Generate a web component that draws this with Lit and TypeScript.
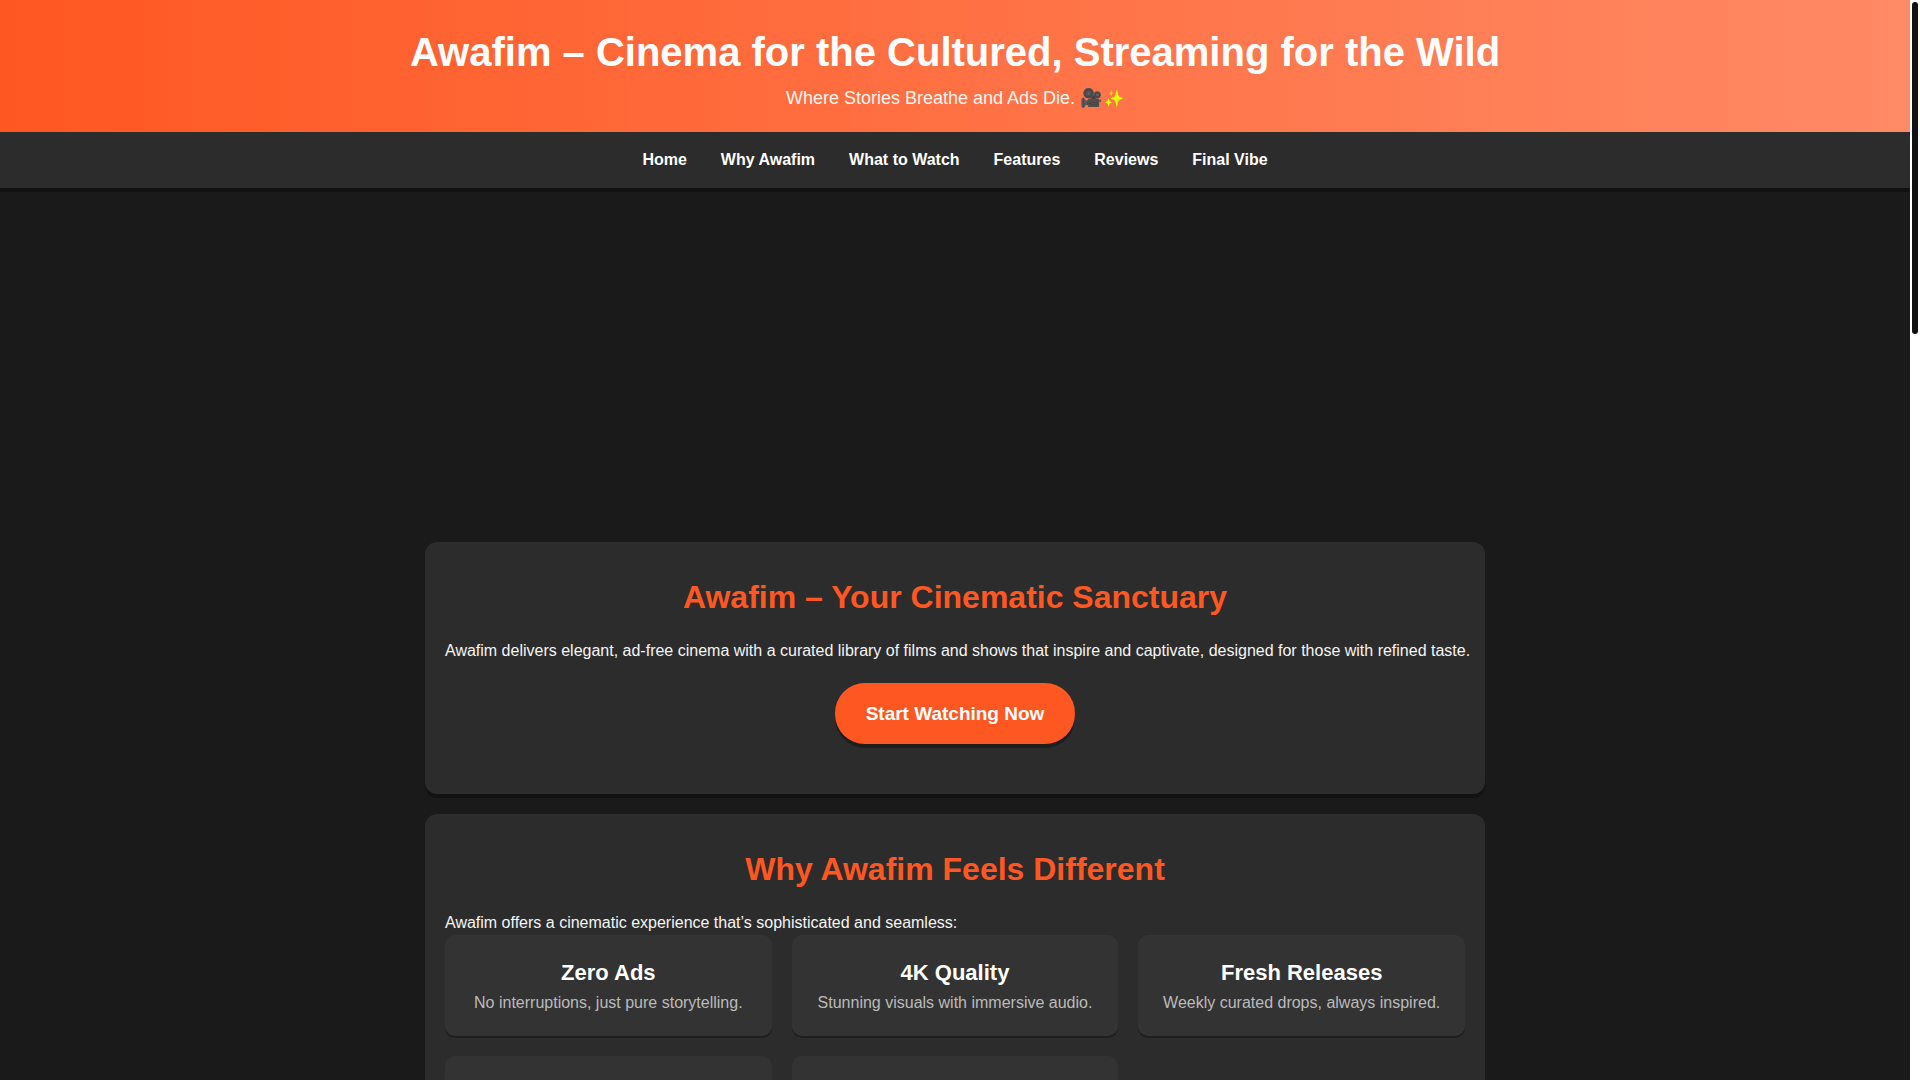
import { LitElement, html, css } from "lit";
import { customElement } from "lit/decorators.js";

const LINKS = [
  { id: "home", label: "Home" },
  { id: "why", label: "Why Awafim" },
  { id: "watch", label: "What to Watch" },
  { id: "features", label: "Features" },
  { id: "reviews", label: "Reviews" },
  { id: "vibe", label: "Final Vibe" },
];

const REASONS = [
  { title: "Zero Ads", text: "No interruptions, just pure storytelling." },
  { title: "4K Quality", text: "Stunning visuals with immersive audio." },
  { title: "Fresh Releases", text: "Weekly curated drops, always inspired." },
];

@customElement("app-root")
export class AppRoot extends LitElement {
  static styles = css`
    :host {
      display: grid;
      grid-template-columns: minmax(0, 1fr) 10px;
      height: 100vh;
      overflow: hidden;
      background: #1a1a1a;
      color: #f5f5f5;
      font: 16px/26px "Liberation Sans", Arial, sans-serif;
    }
    h1, h2, h3, p {
      margin: 0;
    }
    .page {
      min-width: 0;
      min-height: 0;
      overflow: hidden;
    }
    .header {
      padding: 20px;
      background: linear-gradient(90deg, #ff5722, #ff8a65);
      color: #ffffff;
      text-align: center;
    }
    .title {
      font-size: 40px;
      line-height: 64px;
    }
    .tagline {
      font-size: 18px;
      line-height: 28px;
      color: #fff5f2;
    }
    .sparkles {
      display: inline-block;
      padding-left: 2px;
      font-size: 16px;
      line-height: 20px;
      filter: hue-rotate(16deg) saturate(1.6) brightness(1.1);
    }
    .nav {
      display: flex;
      flex-wrap: wrap;
      justify-content: center;
      gap: 34px;
      padding: 15px;
      background: #2c2c2c;
      box-shadow: 0 4px 0 rgba(0, 0, 0, 0.3);
    }
    .nav-link {
      color: #ffffff;
      font-weight: bold;
      text-decoration: none;
    }
    .content {
      display: flex;
      flex-direction: column;
      gap: 20px;
      max-width: 1060px;
      margin: 0 auto;
      padding: 0 20px 20px;
    }
    .stage {
      height: 334px;
    }
    .panel {
      padding: 30px 20px;
      border-radius: 12px;
      background: #2c2c2c;
      box-shadow: 0 4px 0 rgba(0, 0, 0, 0.3);
    }
    .heading {
      margin-bottom: 15px;
      color: #ff5722;
      font-size: 32px;
      line-height: 51px;
      text-align: center;
    }
    .intro {
      line-height: 25px;
    }
    @media (min-width: 1120px) {
      .intro {
        white-space: nowrap;
      }
    }
    .cta {
      display: block;
      margin: 20px auto;
      padding: 15px 31px;
      border: 0;
      border-radius: 30px;
      background: #ff5722;
      box-shadow: 0 4px 0 rgba(0, 0, 0, 0.3);
      color: #ffffff;
      font: bold 19px/31px "Liberation Sans", Arial, sans-serif;
      cursor: pointer;
    }
    .cards {
      display: grid;
      grid-template-columns: repeat(auto-fit, minmax(250px, 1fr));
      gap: 20px;
    }
    .card {
      min-height: 61px;
      padding: 20px;
      border-radius: 10px;
      background: #333333;
      box-shadow: 0 2px 0 rgba(0, 0, 0, 0.3);
      text-align: center;
    }
    .card-title {
      color: #ffffff;
      font-size: 22px;
      line-height: 35px;
    }
    .card-text {
      color: #bbbbbb;
    }
    .rail {
      padding: 2px;
      background: #ffffff;
    }
    .thumb {
      height: 332px;
      border-radius: 3px;
      background: #111111;
    }
  `;

  render() {
    return html`
      <div class="page">
        <header class="header">
          <h1 class="title">Awafim – Cinema for the Cultured, Streaming for the Wild</h1>
          <p class="tagline">Where Stories Breathe and Ads Die. 🎥<span class="sparkles">✨</span></p>
        </header>
        <nav class="nav">
          ${LINKS.map((l) => html`<a class="nav-link" href="#${l.id}">${l.label}</a>`)}
        </nav>
        <main class="content">
          <div class="stage"></div>
          <section class="panel" id="home">
            <h2 class="heading">Awafim – Your Cinematic Sanctuary</h2>
            <p class="intro">Awafim delivers elegant, ad-free cinema with a curated library of films and shows that inspire and captivate, designed for those with refined taste.</p>
            <button class="cta" type="button">Start Watching Now</button>
          </section>
          <section class="panel" id="why">
            <h2 class="heading">Why Awafim Feels Different</h2>
            <p class="intro">Awafim offers a cinematic experience that’s sophisticated and seamless:</p>
            <div class="cards">
              ${REASONS.map(
                (r) => html`
                  <article class="card">
                    <h3 class="card-title">${r.title}</h3>
                    <p class="card-text">${r.text}</p>
                  </article>
                `,
              )}
              <article class="card"></article>
              <article class="card"></article>
            </div>
          </section>
        </main>
      </div>
      <div class="rail"><div class="thumb"></div></div>
    `;
  }
}
